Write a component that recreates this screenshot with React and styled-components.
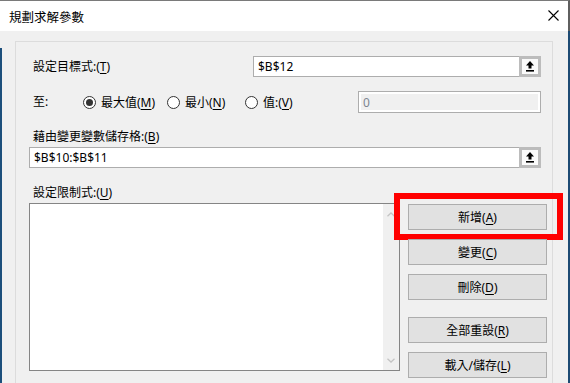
import React from "react";
import styled, { createGlobalStyle } from "styled-components";

const GlobalStyle = createGlobalStyle`
  body {
    margin: 0;
    background: #f0f0f0;
    font-family: "Noto Sans", "Noto Sans CJK TC", sans-serif;
    font-size: 12px;
    color: #000;
  }
`;

const Window = styled.div`
  width: 570px;
  height: 383px;
  overflow: hidden;
  display: flex;
  flex-direction: column;
`;

const TitleBar = styled.div`
  height: 30px;
  flex: none;
  display: flex;
  align-items: center;
  justify-content: space-between;
  background: #fff;
  border-top: 1px solid #7a7a7a;
  border-right: 2px solid #5f5f5f;
  padding: 0 9px 0 9px;
  font-family: "Noto Sans CJK TC", sans-serif;
  font-size: 12.5px;
`;

const CloseIcon = styled.svg`
  width: 11px;
  height: 11px;
  margin-top: -1px;
`;

const Body = styled.div`
  flex: 1;
  padding: 10px 15px 0 15px;
  border-right: 2px solid #1d4a73;
  background: linear-gradient(#1c4f7c, #1c4f7c) 0 17px / 2px 100% no-repeat,
    #f0f0f0;
`;

const Group = styled.div`
  border: 1px solid #dcdcdc;
  border-bottom: none;
  height: 400px;
  padding: 14px 11px 0 13px;
`;

const Row = styled.div`
  display: flex;
  align-items: center;
  height: ${(p) => p.h || 21}px;
  margin-top: ${(p) => p.mt || 0}px;
`;

const Label = styled.div`
  padding-left: 4px;
  line-height: 16px;
  width: ${(p) => (p.w ? `${p.w}px` : "auto")};
  flex: ${(p) => (p.grow ? 1 : "none")};
  margin-top: ${(p) => p.mt || 0}px;
  white-space: nowrap;
`;

const Key = styled.span`
  text-decoration: underline;
  text-underline-offset: 2px;
`;

const RefField = styled.div`
  display: flex;
  height: 21px;
  width: ${(p) => (p.w ? `${p.w}px` : "auto")};
  flex: ${(p) => (p.w ? "none" : 1)};
  margin-top: ${(p) => p.mt || 0}px;
`;

const TextBox = styled.div`
  flex: 1;
  background: #fff;
  border: 1px solid #adadad;
  border-right: none;
  padding-left: 4px;
  display: flex;
  align-items: center;
  white-space: nowrap;
`;

const RefButton = styled.div`
  width: 16px;
  height: 15px;
  border: 3px solid #bcbcbc;
  background: #fafafa;
  display: flex;
  align-items: center;
  justify-content: center;
`;

const Radio = styled.div`
  display: flex;
  align-items: center;
  width: ${(p) => p.w}px;
  flex: none;
  white-space: nowrap;
`;

const Circle = styled.span`
  width: 11px;
  height: 11px;
  border: 1px solid #333;
  border-radius: 50%;
  margin-right: 5px;
  display: flex;
  align-items: center;
  justify-content: center;
  background: #fff;

  &::after {
    content: "";
    width: 7px;
    height: 7px;
    border-radius: 50%;
    background: ${(p) => (p.checked ? "#333" : "transparent")};
  }
`;

const ValueBox = styled.div`
  margin-left: auto;
  box-sizing: border-box;
  width: 183px;
  height: 22px;
  border: 1px solid #adadad;
  background: #f0f0f0;
  box-shadow: inset 0 0 0 2px #fff;
  color: #7d8590;
  padding-left: 4px;
  display: flex;
  align-items: center;
`;

const ConstraintArea = styled.div`
  display: flex;
  margin-top: 2px;
  margin-right: -6px;
`;

const ListBox = styled.div`
  width: 369px;
  height: 166px;
  border: 1px solid #858585;
  background: #fff;
  display: flex;
  justify-content: flex-end;
`;

const ScrollBar = styled.div`
  width: 16px;
  background: #f0f0f0;
  display: flex;
  flex-direction: column;
  justify-content: space-between;
  align-items: center;
  padding: 8px 0 7px;
`;

const ButtonColumn = styled.div`
  margin-left: 8px;
  padding-top: 1px;
  display: flex;
  flex-direction: column;
  gap: 9px;
`;

const Button = styled.div`
  position: relative;
  width: 137px;
  height: 24px;
  background: #e1e1e1;
  border: 1px solid #adadad;
  display: flex;
  align-items: center;
  justify-content: center;
  margin-top: ${(p) => p.mt || 0}px;
  white-space: nowrap;
`;

const Highlight = styled.span`
  position: absolute;
  top: -12px;
  left: -15px;
  right: -17px;
  bottom: -11px;
  border: 6px solid #ff0000;
`;

const CheckRow = styled.div`
  display: flex;
  align-items: flex-start;
  margin-top: 11px;
  padding-left: 5px;
`;

const CheckBox = styled.span`
  width: 11px;
  height: 11px;
  border: 1px solid #333;
  background: #fff;
`;

const UpArrow = () => (
  <svg width="8" height="11" viewBox="0 0 8 11">
    <path d="M4 0 L8 4.5 H5.5 V7.5 H2.5 V4.5 H0 Z" fill="#000" />
    <rect x="0" y="9" width="8" height="1.6" fill="#000" />
  </svg>
);

const Chevron = ({ down }) => (
  <svg width="8" height="5" viewBox="0 0 8 5">
    <path
      d={down ? "M0.5 0.8 L4 4 L7.5 0.8" : "M0.5 4.2 L4 1 L7.5 4.2"}
      fill="none"
      stroke="#c4c4c4"
      strokeWidth="1.3"
    />
  </svg>
);

const App = () => {
  return (
    <Window>
      <GlobalStyle />
      <TitleBar>
        <span>規劃求解參數</span>
        <CloseIcon viewBox="0 0 11 11">
          <path d="M0.5 0.5 L10.5 10.5 M10.5 0.5 L0.5 10.5" stroke="#000" strokeWidth="1.1" />
        </CloseIcon>
      </TitleBar>
      <Body>
        <Group>
          <Row>
            <Label grow>
              設定目標式:(<Key>T</Key>)
            </Label>
            <RefField w={288}>
              <TextBox>$B$12</TextBox>
              <RefButton>
                <UpArrow />
              </RefButton>
            </RefField>
          </Row>

          <Row h={22} mt={14}>
            <Label w={50}>至:</Label>
            <Radio w={84}>
              <Circle checked />
              最大值(<Key>M</Key>)
            </Radio>
            <Radio w={78}>
              <Circle />
              最小(<Key>N</Key>)
            </Radio>
            <Radio w={70}>
              <Circle />
              值:(<Key>V</Key>)
            </Radio>
            <ValueBox>0</ValueBox>
          </Row>

          <Label mt={16}>
            藉由變更變數儲存格:(<Key>B</Key>)
          </Label>
          <RefField mt={2}>
            <TextBox>$B$10:$B$11</TextBox>
            <RefButton>
              <UpArrow />
            </RefButton>
          </RefField>

          <Label mt={17}>
            設定限制式:(<Key>U</Key>)
          </Label>
          <ConstraintArea>
            <ListBox>
              <ScrollBar>
                <Chevron />
                <Chevron down />
              </ScrollBar>
            </ListBox>
            <ButtonColumn>
              <Button>
                新增(<Key>A</Key>)
                <Highlight />
              </Button>
              <Button>
                變更(<Key>C</Key>)
              </Button>
              <Button>
                刪除(<Key>D</Key>)
              </Button>
              <Button mt={8}>
                全部重設(<Key>R</Key>)
              </Button>
              <Button>
                載入/儲存(<Key>L</Key>)
              </Button>
            </ButtonColumn>
          </ConstraintArea>

          <CheckRow>
            <CheckBox />
          </CheckRow>
        </Group>
      </Body>
    </Window>
  );
};

export default App;
